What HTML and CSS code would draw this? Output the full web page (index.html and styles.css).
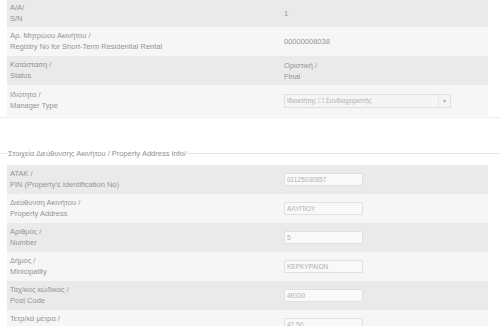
FILE: index.html
```html
<!DOCTYPE html>
<html lang="el">
<head>
    <meta charset="UTF-8">
    <title>Στοιχεία Ακινήτου</title>
<link rel="stylesheet" href="styles.css">
</head>
<body>
    <div class="panel">
        <div class="row dark first">
            <div class="label">A/A/<br>S/N</div>
            <div class="value">1</div>
        </div>
        <div class="row light">
            <div class="label">Αρ. Μητρώου Ακινήτου /<br>Registry No for Short-Term Residential Rental</div>
            <div class="value">00000008038</div>
        </div>
        <div class="row dark">
            <div class="label">Κατάσταση /<br>Status</div>
            <div class="value">Οριστική /<br>Final</div>
        </div>
        <div class="row light tall">
            <div class="label">Ιδιότητα /<br>Manager Type</div>
            <div class="value">
                <div class="select">
                    <span>Ιδιοκτήτης ☐ Συνδιαχειριστής</span>
                    <span class="arrow">▾</span>
                </div>
            </div>
        </div>
    </div>
    <div class="divider"></div>

    <fieldset class="address">
        <legend>Στοιχεία Διεύθυνσης Ακινήτου / Property Address Info/</legend>
        <div class="rows">
            <div class="row dark">
                <div class="label">ATAK /<br>PIN (Property's Identification No)</div>
                <div class="value"><input type="text" value="01125030857" disabled></div>
            </div>
            <div class="row light">
                <div class="label">Διεύθυνση Ακινήτου /<br>Property Address</div>
                <div class="value"><input type="text" value="ΑΛΥΠΙΟΥ" disabled></div>
            </div>
            <div class="row dark">
                <div class="label">Αριθμός /<br>Number</div>
                <div class="value"><input type="text" value="5" disabled></div>
            </div>
            <div class="row light">
                <div class="label">Δήμος /<br>Minicipality</div>
                <div class="value"><input type="text" value="ΚΕΡΚΥΡΑΙΩΝ" disabled></div>
            </div>
            <div class="row dark">
                <div class="label">Ταχ/κός κώδικας /<br>Post Code</div>
                <div class="value"><input type="text" value="49100" disabled></div>
            </div>
            <div class="row light">
                <div class="label">Τετρ/κά μέτρα /<br>&nbsp;</div>
                <div class="value"><input type="text" value="42.50" disabled></div>
            </div>
        </div>
    </fieldset>
</body>
</html>
```

FILE: styles.css
```css
body{
    margin: 0;
    font-family: "Liberation Sans", Arial, sans-serif;
    font-size: 7.5px;
    color: #959595;
    background: #fff;
    overflow: hidden;
}
.panel{
    margin: 0 12px 0 7px;
}
.row{
    display: grid;
    grid-template-columns: 277px 1fr;
    align-items: center;
    height: 29px;
}
.row.first{
    height: 27px;
}
.row.tall{
    height: 31px;
}
.dark{
    background: #eaeaea;
}
.light{
    background: #f6f6f6;
}
.label{
    padding-left: 3px;
    line-height: 10.5px;
}
.value{
    line-height: 11px;
}
.select{
    width: 163px;
    height: 12px;
    border: 1px solid #e0e0e0;
    background: #f5f5f5;
    display: flex;
    align-items: center;
    justify-content: space-between;
    font-size: 6.5px;
    color: #b0b0b0;
    padding-left: 2px;
}
.select .arrow{
    width: 11px;
    height: 12px;
    border-left: 1px solid #e8e8e8;
    text-align: center;
    font-size: 6px;
    line-height: 12px;
    color: #aaa;
}
.divider{
    height: 1px;
    background: #f1efe4;
    margin-top: 1px;
}
.address{
    margin: 31px 0 0 0;
    padding: 0;
    border: none;
    border-top: 1px solid #e6e6e6;
}
.address legend{
    padding: 0 1px;
    margin-left: 7px;
    color: #909090;
    font-size: 7.5px;
}
.rows{
    margin: 7px 12px 0 7px;
}
.address input{
    width: 79px;
    height: 13px;
    box-sizing: border-box;
    border: 1px solid #e0e0e0;
    border-radius: 1px;
    background: #f9f9f9;
    font-family: "Liberation Sans", Arial, sans-serif;
    font-size: 6.5px;
    color: #b0b0b0;
    padding: 0 2px;
}
```
